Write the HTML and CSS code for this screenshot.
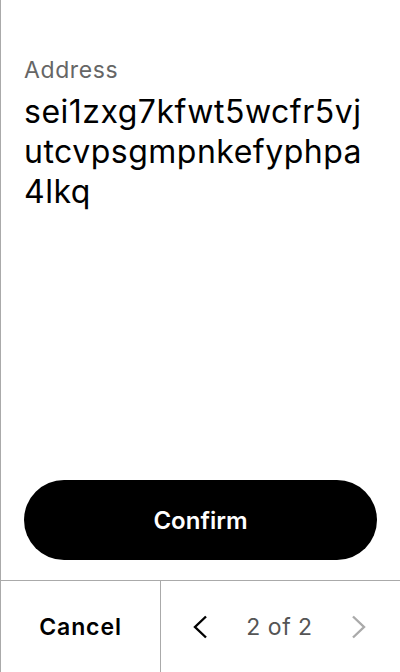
FILE: index.html
```html
<!DOCTYPE html>
<html>
<head>
<meta charset="utf-8">
<link rel="stylesheet" href="styles.css">
</head>
<body>
<div class="screen">
  <main class="content">
    <div class="label">Address</div>
    <div class="value">sei1zxg7kfwt5wcfr5vj utcvpsgmpnkefyphpa 4lkq</div>
  </main>
  <div class="actions">
    <button class="confirm">Confirm</button>
  </div>
  <footer class="footer">
    <div class="cancel">Cancel</div>
    <div class="pager">
      <svg class="chev" width="24" height="24" viewBox="0 0 24 24"><path d="M17 1.5 L6 12 L17 22.5" fill="none" stroke="#000" stroke-width="2.4"/></svg>
      <span class="count">2 of 2</span>
      <svg class="chev" width="24" height="24" viewBox="0 0 24 24"><path d="M7 1.5 L18 12 L7 22.5" fill="none" stroke="#aaa" stroke-width="2.4"/></svg>
    </div>
  </footer>
</div>
</body>
</html>
```
FILE: styles.css
```css
html, body {
  margin: 0;
  padding: 0;
  background: #fff;
}
body {
  font-family: Inter, "Noto Sans", sans-serif;
}
.screen {
  width: 400px;
  height: 672px;
  box-sizing: border-box;
  border-left: 1px solid #aaa;
  display: flex;
  flex-direction: column;
}
.content {
  flex: 1;
  padding: 56px 23px 0 23px;
}
.label {
  font-size: 23px;
  line-height: 28px;
  letter-spacing: 0.6px;
  color: #666;
}
.value {
  margin-top: 8px;
  font-size: 32px;
  line-height: 40px;
  letter-spacing: 0.5px;
  color: #000;
  width: 350px;
}
.actions {
  padding: 0 23px 20px 23px;
}
.confirm {
  display: block;
  width: 100%;
  height: 80px;
  border: none;
  border-radius: 40px;
  background: #000;
  color: #fff;
  font-family: Inter, "Noto Sans", sans-serif;
  font-size: 24px;
  font-weight: 600;
}
.footer {
  height: 92px;
  box-sizing: border-box;
  border-top: 1px solid #aaa;
  display: flex;
}
.cancel {
  width: 159px;
  border-right: 1px solid #aaa;
  display: flex;
  align-items: center;
  justify-content: center;
  font-size: 23px;
  letter-spacing: 0.9px;
  font-weight: 600;
  color: #000;
}
.pager {
  flex: 1;
  display: flex;
  align-items: center;
  justify-content: space-between;
  padding: 0 30px 0 28px;
}
.count {
  font-size: 23px;
  letter-spacing: 0.5px;
  color: #555;
}
```
